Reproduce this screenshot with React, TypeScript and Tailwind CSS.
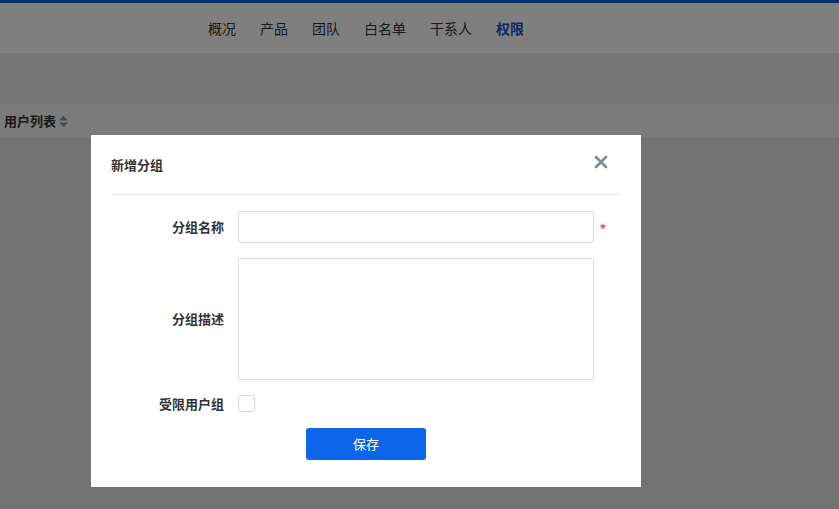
import React from 'react';

const font = { fontFamily: '"Noto Sans CJK SC", "Noto Sans", sans-serif' };

const navItems = ['概况', '产品', '团队', '白名单', '干系人', '权限'];

export default function App() {
  return (
    <div className="relative w-[839px] h-[509px] overflow-hidden bg-[#e6e6e6]" style={font}>
      {/* Page behind the mask */}
      <div className="h-[3px] bg-[#0f5dd8]" />
      <div className="h-[50px] bg-white flex items-center pl-[208px] gap-[24px] text-[14px] text-[#333]">
        {navItems.map((item) => (
          <span key={item} className={item === '权限' ? 'font-bold text-[#1450c8]' : ''}>
            {item}
          </span>
        ))}
      </div>
      <div className="h-[51px] bg-[#eeeeee]" />
      <div className="h-[34px] bg-[#f6f6f6] flex items-center pl-[4px] text-[13px] font-bold text-[#333]">
        用户列表
        <svg width="11" height="13" viewBox="0 0 11 13" className="ml-[2px]">
          <path d="M5.5 1 L10 5.5 H1 Z" fill="#8890a0" />
          <path d="M5.5 12 L10 7.5 H1 Z" fill="#8890a0" />
        </svg>
      </div>

      {/* Mask */}
      <div className="absolute inset-0 bg-black/50" />

      {/* Modal */}
      <div className="absolute left-[91px] top-[135px] w-[550px] h-[352px] bg-white px-[20px]">
        <div className="flex items-center justify-between h-[60px] border-b border-[#e8e8e8]">
          <span className="text-[13px] font-bold text-[#333] pt-[1px]">新增分组</span>
          <svg width="14" height="14" viewBox="0 0 14 14" className="mr-[13px] -mt-[6px]">
            <path d="M2 2 L12 12 M12 2 L2 12" stroke="#7f8a9c" strokeWidth="2.8" strokeLinecap="round" />
          </svg>
        </div>

        <div className="pt-[16px] flex flex-col">
          <div className="flex items-center h-[32px]">
            <label className="w-[113px] text-right text-[13px] font-bold text-[#333]">分组名称</label>
            <input className="ml-[14px] w-[356px] h-[32px] border border-[#dcdcdc] rounded-[2px] outline-none" />
            <span className="ml-[5px] text-[#e94b4b] text-[17px] pt-[6px]">*</span>
          </div>
          <div className="flex items-center mt-[15px]">
            <label className="w-[113px] text-right text-[13px] font-bold text-[#333]">分组描述</label>
            <textarea className="ml-[14px] w-[356px] h-[122px] border border-[#dcdcdc] rounded-[2px] outline-none resize-none" />
          </div>
          <div className="flex items-center mt-[15px] h-[17px]">
            <label className="w-[113px] text-right text-[13px] font-bold text-[#333]">受限用户组</label>
            <span className="ml-[14px] w-[17px] h-[17px] border border-[#d4d4d4] rounded-[3px]" />
          </div>
          <div className="flex mt-[16px]">
            <button className="ml-[195px] w-[120px] h-[32px] bg-[#0d66ea] text-white text-[13px] rounded-[3px]">
              保存
            </button>
          </div>
        </div>
      </div>
    </div>
  );
}
